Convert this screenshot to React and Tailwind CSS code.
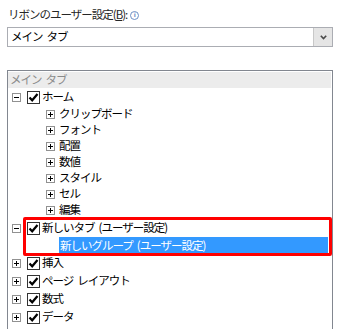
import React from "react";

const FONT = { fontFamily: '"Noto Sans CJK JP", "Noto Sans", sans-serif' };

function T({ children }) {
  const parts = String(children).split(" ");
  return (
    <>
      {parts.map((p, i) => (
        <React.Fragment key={i}>
          {i > 0 && <span className="inline-block w-[4px]" />}
          {p}
        </React.Fragment>
      ))}
    </>
  );
}

function Expander({ open }) {
  return (
    <span className="relative w-[9px] h-[9px] border border-[#919191] bg-white shrink-0">
      <span className="absolute left-[1px] top-[3px] w-[5px] h-px bg-black" />
      {!open && <span className="absolute left-[3px] top-[1px] w-px h-[5px] bg-black" />}
    </span>
  );
}

function Check() {
  return (
    <span className="w-[13px] h-[13px] border border-[#333] bg-white shrink-0 flex items-center justify-center">
      <svg width="11" height="11" viewBox="0 0 11 11">
        <path d="M1.5 5.5 L4.2 8.3 L9.5 2" fill="none" stroke="#000" strokeWidth="2.2" />
      </svg>
    </span>
  );
}

const TXT = "text-[11.5px] leading-none tracking-[-1px] whitespace-nowrap";

function TopRow({ open, label }) {
  return (
    <div className="h-[18px] flex items-center pl-[4px]">
      <Expander open={open} />
      <span className="ml-[6px]"><Check /></span>
      <span className={`ml-[2px] text-black ${TXT}`}><T>{label}</T></span>
    </div>
  );
}

function SubRow({ label }) {
  return (
    <div className="h-[16px] flex items-center pl-[38px]">
      <Expander open={false} />
      <span className={`ml-[4px] text-black ${TXT}`}><T>{label}</T></span>
    </div>
  );
}

export default function App() {
  const subs = ["クリップボード", "フォント", "配置", "数値", "スタイル", "セル", "編集"];
  return (
    <div className="relative w-[340px] h-[329px] bg-white overflow-hidden flex flex-col" style={FONT}>
      <div className={`h-[16px] mt-[7px] ml-[8px] flex items-center text-[#262626] ${TXT}`}>
        <span>リボンのユーザー設定(<span className="underline">B</span>):</span>
        <span className="ml-[3px] w-[9px] h-[9px] rounded-full border border-[#6c8fc6] flex items-center justify-center text-[6px] leading-none text-[#6c8fc6] font-bold tracking-normal" style={{ fontFamily: '"DejaVu Sans", sans-serif' }}>i</span>
      </div>
      <div className="mt-[4px] mx-[7px] h-[20px] border border-[#abadb3] flex items-stretch">
        <div className={`flex-1 flex items-center pl-[3px] text-black ${TXT}`}><T>メイン タブ</T></div>
        <div className="w-[19px] bg-[#e5e5e5] border-l border-[#c8c8c8] flex items-center justify-center">
          <svg width="7" height="5" viewBox="0 0 7 5">
            <path d="M0.8 0.8 L3.5 3.6 L6.2 0.8" fill="none" stroke="#4a4a4a" strokeWidth="1.6" />
          </svg>
        </div>
      </div>
      <div className="mt-[23px] mx-[7px] flex-1 border border-b-0 border-[#828790] pt-px pr-px">
        <div className={`h-[16px] bg-[#ececec] flex items-center pl-[2px] text-[#8a8a8a] ${TXT}`}><T>メイン タブ</T></div>
        <TopRow open label="ホーム" />
        {subs.map((s) => (
          <SubRow key={s} label={s} />
        ))}
        <div className="h-px" />
        <TopRow open label="新しいタブ (ユーザー設定)" />
        <div className="h-[17px] flex items-stretch pl-[51px] pr-[3px]">
          <div className={`flex-1 bg-[#3399ff] flex items-center pl-[1px] text-white ${TXT}`}><T>新しいグループ (ユーザー設定)</T></div>
        </div>
        <TopRow label="挿入" />
        <TopRow label="ページ レイアウト" />
        <TopRow label="数式" />
        <TopRow label="データ" />
      </div>
      <div className="absolute left-[23px] top-[217px] w-[309px] h-[39px] border-[3px] border-[#ff0000] rounded-[2px] pointer-events-none" />
    </div>
  );
}
